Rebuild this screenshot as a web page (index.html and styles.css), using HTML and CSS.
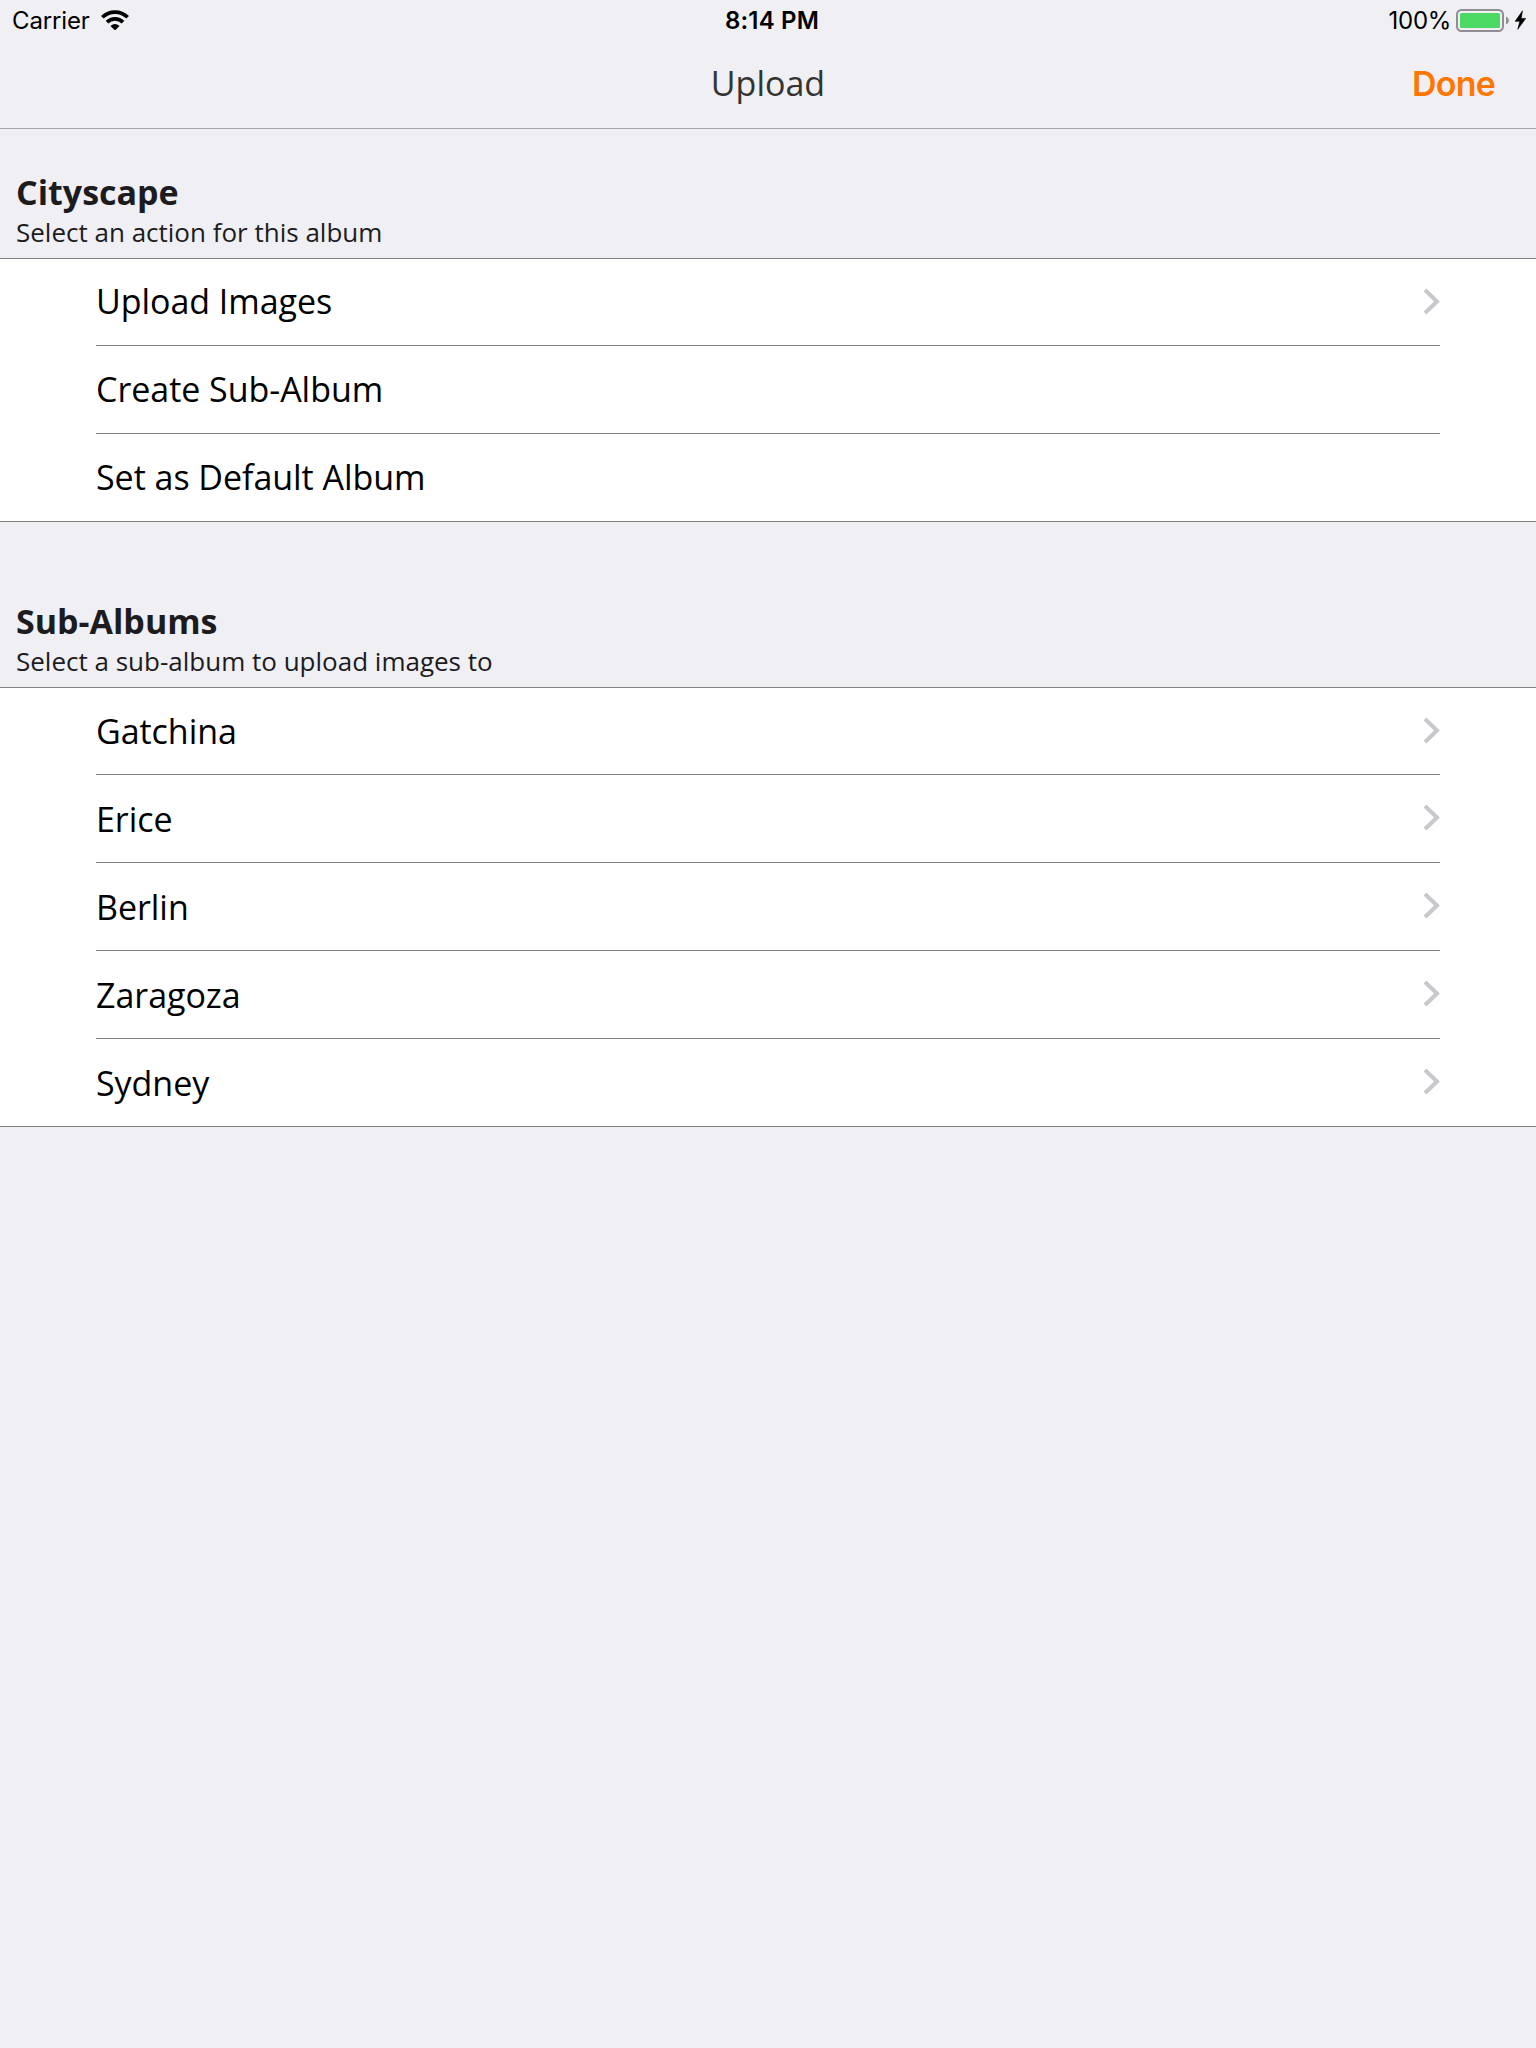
FILE: index.html
```html
<!DOCTYPE html>
<html lang="en">
<head>
<meta charset="utf-8">
<title>Upload</title>
<link rel="stylesheet" href="styles.css">
</head>
<body>
<svg width="0" height="0" class="defs" aria-hidden="true">
  <symbol id="chevron" viewBox="0 0 17 27"><path d="M2 2 L14 13.5 L2 25" fill="none" stroke="#c7c7cc" stroke-width="4"/></symbol>
</svg>
<header class="top">
  <div class="status">
    <div class="status-left">
      <span class="carrier">Carrier</span>
      <svg class="wifi" width="28" height="20" viewBox="0 0 28 20">
        <g fill="none" stroke="#000">
          <path d="M1.3 7.3 A18.1 18.1 0 0 1 26.7 7.3" stroke-width="3.7"/>
          <path d="M6 12.1 A11.4 11.4 0 0 1 22 12.1" stroke-width="3.7"/>
        </g>
        <path d="M9.5 16 Q14 12 18.5 16 L14.7 19.8 Q14 20.4 13.3 19.8 Z"/>
      </svg>
    </div>
    <span class="time">8:14 PM</span>
    <div class="status-right">
      <span class="percent">100%</span>
      <svg class="battery" width="70" height="24" viewBox="0 0 70 24">
        <rect x="1" y="1" width="46" height="21" rx="4.5" fill="none" stroke="#8e8e93" stroke-width="2"/>
        <rect x="4" y="4" width="40" height="15" rx="1.5" fill="#4cd964"/>
        <path d="M50 7.5 Q53 9 53 11.5 Q53 14 50 15.5 Z" fill="#8e8e93"/>
        <path d="M66.5 1.8 L59.2 12.3 H63.8 L61.8 20.3 L69.7 9.4 H65.2 Z" stroke="#000" stroke-width=".6"/>
      </svg>
    </div>
  </div>
  <nav class="nav">
    <h1 class="nav-title">Upload</h1>
    <span class="done">Done</span>
  </nav>
</header>
<main>
  <section class="group">
    <div class="head">
      <h2 class="head-title">Cityscape</h2>
      <p class="head-sub">Select an action for this album</p>
    </div>
    <ul class="list list-actions">
      <li class="row">Upload Images<svg class="chev"><use href="#chevron"/></svg></li>
      <li class="row">Create Sub-Album</li>
      <li class="row">Set as Default Album</li>
    </ul>
  </section>
  <section class="group group-sub">
    <div class="head">
      <h2 class="head-title">Sub-Albums</h2>
      <p class="head-sub">Select a sub-album to upload images to</p>
    </div>
    <ul class="list">
      <li class="row">Gatchina<svg class="chev"><use href="#chevron"/></svg></li>
      <li class="row">Erice<svg class="chev"><use href="#chevron"/></svg></li>
      <li class="row">Berlin<svg class="chev"><use href="#chevron"/></svg></li>
      <li class="row">Zaragoza<svg class="chev"><use href="#chevron"/></svg></li>
      <li class="row">Sydney<svg class="chev"><use href="#chevron"/></svg></li>
    </ul>
  </section>
</main>
</body>
</html>
```
FILE: styles.css
```css
* { box-sizing: border-box; margin: 0; padding: 0; }
body { background: #efeff4; min-height: 2048px; font-family: "Open Sans", sans-serif; color: #000; }
.defs { display: none; }
.top { height: 129px; border-bottom: 1px solid #a7a7ab; }
.status { height: 40px; display: grid; grid-template-columns: 1fr auto 1fr; align-items: start; font-family: Inter, sans-serif; font-size: 24px; line-height: 42px; }
.status-left { display: flex; padding-left: 12px; gap: 11px; }
.carrier { letter-spacing: -0.15px; }
.wifi { margin-top: 10px; }
.time { font-weight: 600; padding-left: 8px; letter-spacing: 0.2px; }
.status-right { display: flex; justify-content: flex-end; padding-right: 10px; gap: 5px; }
.percent { letter-spacing: -0.3px; }
.battery { margin-top: 9px; }
.nav { height: 88px; display: grid; grid-template-columns: 1fr auto 1fr; align-items: center; line-height: 48px; }
.nav-title { grid-column: 2; font-size: 34px; font-weight: 400; color: #333; padding-bottom: 2px; }
.done { justify-self: end; padding-right: 41px; font-family: Inter, sans-serif; font-size: 34px; font-weight: 600; letter-spacing: -0.8px; color: #ff7700; }
.head { height: 129px; padding: 39px 16px 0; color: #1c1c1e; }
.head-title { font-size: 34px; font-weight: 700; line-height: 48px; }
.head-sub { font-size: 26px; line-height: 32px; }
.group-sub .head { height: 165px; padding-top: 75px; }
.list { list-style: none; background: #fff; border-top: 1px solid #808080; border-bottom: 1px solid #808080; padding: 0 96px; }
.row { height: 88px; display: flex; align-items: center; justify-content: space-between; border-bottom: 1px solid #808080; font-size: 34px; line-height: 48px; letter-spacing: -0.04px; }
.row:first-child { height: 87px; }
.row:last-child { height: 87px; border-bottom: 0; }
.list-actions .row { padding-bottom: 2px; }
.chev { width: 17px; height: 27px; margin-bottom: 2px; }
.list-actions .chev { margin-bottom: 0; }
```
